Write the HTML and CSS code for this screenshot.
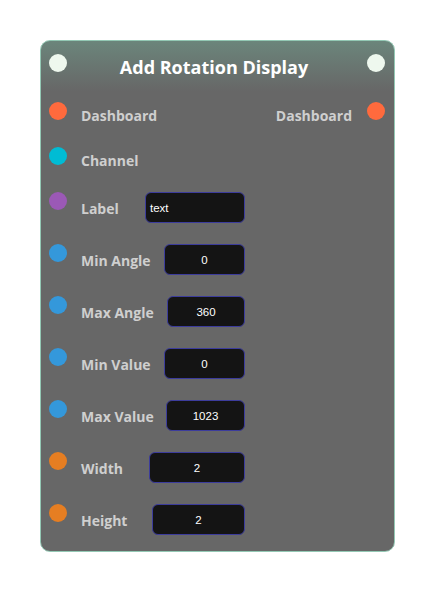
FILE: index.html
```html
<!DOCTYPE html>
<html>
<head>
<meta charset="utf-8">
<link rel="stylesheet" href="styles.css">
</head>
<body>
<div class="card">
  <div class="header">
    <span class="dot dot-white"></span>
    <span class="title">Add Rotation Display</span>
    <span class="dot dot-white"></span>
  </div>
  <div class="rows">
    <div class="row row-plain">
      <span class="dot dot-red"></span>
      <span class="label">Dashboard</span>
      <span class="spacer"></span>
      <span class="label label-out">Dashboard</span>
      <span class="dot dot-red"></span>
    </div>
    <div class="row row-plain">
      <span class="dot dot-cyan"></span>
      <span class="label">Channel</span>
    </div>
    <div class="row">
      <span class="dot dot-purple"></span>
      <span class="label">Label</span>
      <span class="field field-text w-100">text</span>
    </div>
    <div class="row">
      <span class="dot dot-blue"></span>
      <span class="label">Min Angle</span>
      <span class="field w-81">0</span>
    </div>
    <div class="row">
      <span class="dot dot-blue"></span>
      <span class="label">Max Angle</span>
      <span class="field w-78">360</span>
    </div>
    <div class="row">
      <span class="dot dot-blue"></span>
      <span class="label">Min Value</span>
      <span class="field w-81">0</span>
    </div>
    <div class="row">
      <span class="dot dot-blue"></span>
      <span class="label">Max Value</span>
      <span class="field w-79">1023</span>
    </div>
    <div class="row">
      <span class="dot dot-orange"></span>
      <span class="label">Width</span>
      <span class="field w-96">2</span>
    </div>
    <div class="row">
      <span class="dot dot-orange"></span>
      <span class="label">Height</span>
      <span class="field w-93">2</span>
    </div>
  </div>
</div>
</body>
</html>
```
FILE: styles.css
```css
html, body {
  margin: 0;
  padding: 0;
  background: #ffffff;
}
body {
  padding: 40px 0 0 40px;
  font-family: "Open Sans", "DejaVu Sans", sans-serif;
}
.card {
  box-sizing: border-box;
  width: 355px;
  height: 512px;
  border: 1px solid #93c8b4;
  border-radius: 10px;
  background: linear-gradient(to bottom, #6b857b 0px, #676767 50px, #676767 100%);
  padding: 0 9px 0 8px;
}
.header {
  display: flex;
  align-items: flex-start;
  padding-top: 13px;
  height: 61px;
  box-sizing: border-box;
}
.title {
  flex: 1;
  text-align: center;
  color: #ffffff;
  font-weight: 700;
  font-size: 18px;
  line-height: 26px;
  margin-top: 0px;
  padding-right: 6px;
}
.dot {
  width: 18px;
  height: 18px;
  border-radius: 50%;
  flex: none;
}
.dot-white { background: #eef8ee; }
.dot-red { background: #ff6a3d; }
.dot-cyan { background: #00bcd4; }
.dot-purple { background: #9b59b6; }
.dot-blue { background: #3498db; }
.dot-orange { background: #e67e22; }
.rows {
  display: flex;
  flex-direction: column;
  gap: 21px;
}
.row {
  display: flex;
  align-items: center;
  height: 31px;
}
.row-plain {
  height: 24px;
}
.row > .dot {
  align-self: flex-start;
}
.label {
  color: #cfcfcf;
  font-weight: 700;
  font-size: 14px;
  margin-left: 14px;
  padding-top: 2px;
}
.label-out {
  margin-left: 0;
  margin-right: 15px;
}
.spacer { flex: 1; }
.field {
  box-sizing: border-box;
  margin-left: auto;
  margin-right: 140px;
  height: 31px;
  background: #141414;
  border: 1px solid #3c3c9c;
  border-radius: 6px;
  color: #ffffff;
  font-family: "Liberation Sans", Arial, sans-serif;
  font-size: 11.5px;
  display: flex;
  align-items: center;
  justify-content: center;
}
.field-text {
  justify-content: flex-start;
  padding-left: 4px;
}
.w-100 { width: 100px; }
.w-81 { width: 81px; }
.w-78 { width: 78px; }
.w-79 { width: 79px; }
.w-96 { width: 96px; }
.w-93 { width: 93px; }
```
